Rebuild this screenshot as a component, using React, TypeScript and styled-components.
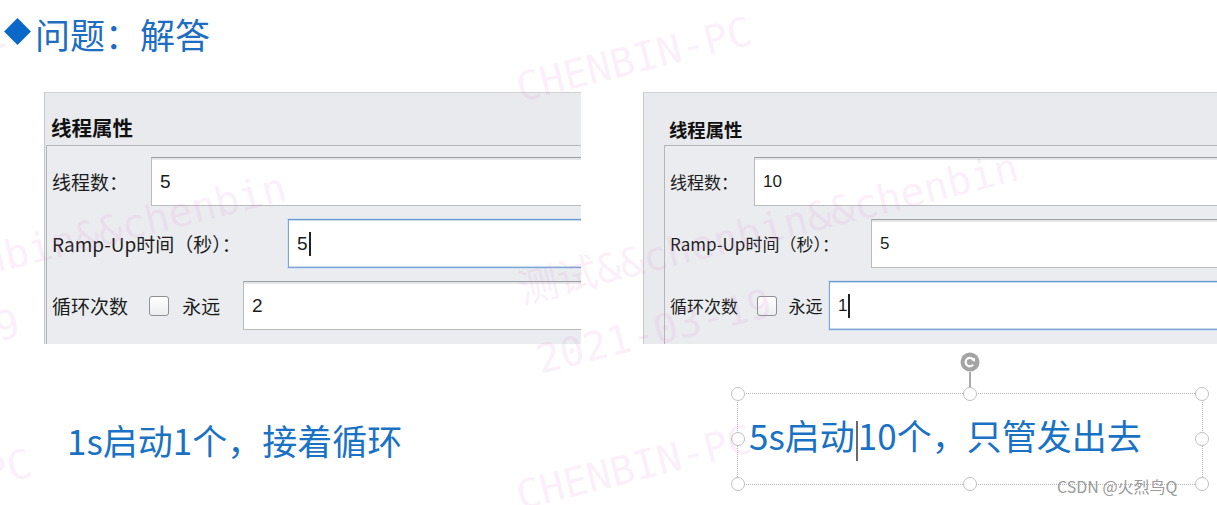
import React from "react";
import styled, { createGlobalStyle } from "styled-components";

const GlobalStyle = createGlobalStyle`
  html, body { margin: 0; padding: 0; background: #fff; }
  body { font-family: "Noto Sans CJK SC", "Noto Sans", sans-serif; }
`;

const Page = styled.div`
  position: relative;
  width: 1217px;
  height: 505px;
  overflow: hidden;
  background: #fff;
  display: flex;
  flex-direction: column;
`;

const Title = styled.h1`
  margin: 0;
  height: 66px;
  padding-left: 8px;
  display: flex;
  align-items: center;
  gap: 8px;
  font-size: 35px;
  font-weight: 400;
  line-height: 1;
  color: #1d6ec2;
`;

const Diamond = styled.span`
  width: 19px;
  height: 19px;
  margin-top: -3px;
  background: #0b67c8;
  transform: rotate(45deg);
`;

const Panels = styled.div`
  display: flex;
  gap: 62px;
  margin-top: 26px;
  padding-left: 44px;
  height: 252px;
`;

const Panel = styled.section<{ $w?: number; $inset: number; $fs: number }>`
  ${(p) => (p.$w ? `width: ${p.$w}px;` : `flex: 1;`)}
  box-sizing: border-box;
  display: flex;
  flex-direction: column;
  overflow: hidden;
  padding-left: ${(p) => p.$inset}px;
  background: #e8eaed;
  border-top: 1px solid #cfd1d4;
  border-left: 1px solid #c6c8cb;
  font-size: ${(p) => p.$fs}px;
  color: #1c1c1c;
`;

const Header = styled.div`
  height: 52px;
  box-sizing: border-box;
  display: flex;
  align-items: flex-end;
  padding: 0 0 5px 5px;
  font-size: 1.08em;
  font-weight: 700;
  line-height: 1.2;
  color: #111;
`;

const Inner = styled.div`
  flex: 1;
  display: flex;
  flex-direction: column;
  gap: 13px;
  padding-top: 11px;
  background: #eaecef;
  border-top: 1px solid #b4b6b9;
  border-left: 1px solid #b4b6b9;
`;

const Row = styled.div`
  display: flex;
  align-items: center;
  height: 49px;
`;

const Label = styled.div<{ $w: number }>`
  width: ${(p) => p.$w}px;
  flex: none;
  box-sizing: border-box;
  padding-left: 5px;
  display: flex;
  align-items: center;
  white-space: nowrap;
`;

const Check = styled.span`
  width: 20px;
  height: 20px;
  margin: 0 0.7em 0 1.1em;
  box-sizing: border-box;
  border: 1px solid #8e9094;
  border-radius: 3px;
  background: linear-gradient(#ffffff, #eceef0);
`;

const Field = styled.div<{ $focus?: boolean }>`
  flex: 1;
  height: 100%;
  box-sizing: border-box;
  display: flex;
  align-items: center;
  padding-left: 8px;
  background: #fff;
  font-family: "Liberation Sans", "Noto Sans", sans-serif;
  border: 1px solid ${(p) => (p.$focus ? "#7ea6d3" : "#b9bbbe")};
  border-top-color: ${(p) => (p.$focus ? "#6d99cc" : "#9c9ea1")};
  border-right: none;
  box-shadow: ${(p) =>
    p.$focus
      ? "inset 0 1px 0 #c9dbef, inset 0 -1px 0 #c9dbef, 0 0 0 1px #d3e2f3"
      : "inset 0 2px 0 #e4e6e9"};
`;

const Caret = styled.span<{ $h: number; $c: string }>`
  display: inline-block;
  width: 2px;
  height: ${(p) => p.$h}px;
  margin-left: 1px;
  background: ${(p) => p.$c};
  vertical-align: middle;
`;

const Bottom = styled.div`
  display: flex;
  align-items: center;
  justify-content: space-between;
  padding: 49px 14px 0 67px;
`;

const Caption = styled.div`
  font-size: 35px;
  line-height: 1;
  color: #1a72c5;
  white-space: nowrap;
`;

const Frame = styled.div`
  position: relative;
  width: 466px;
  height: 92px;
  box-sizing: border-box;
  border: 1.5px dotted #b7b7b7;
  padding-left: 11px;
  display: flex;
  align-items: center;
`;

const Handle = styled.span<{ $x: string; $y: string }>`
  position: absolute;
  left: ${(p) => p.$x};
  top: ${(p) => p.$y};
  width: 12px;
  height: 12px;
  margin: -7px 0 0 -7px;
  border: 1.5px solid #c0c0c0;
  border-radius: 50%;
  background: #fff;
`;

const Rotator = styled.div`
  position: absolute;
  left: 50%;
  top: -42px;
  width: 20px;
  margin-left: -10px;
  display: flex;
  flex-direction: column;
  align-items: center;
`;

const Stem = styled.span`
  width: 1.5px;
  height: 22px;
  background: #a9a9a9;
`;

const Credit = styled.div`
  position: absolute;
  left: 1057px;
  top: 474px;
  font-size: 16px;
  color: #9a9a9a;
  white-space: nowrap;
`;

const Mark = styled.div<{ $x: number; $y: number }>`
  position: absolute;
  left: ${(p) => p.$x}px;
  top: ${(p) => p.$y - 32}px;
  font-family: "DejaVu Sans Mono", "Noto Sans CJK SC", monospace;
  font-size: 40px;
  line-height: 40px;
  color: rgba(230, 130, 220, 0.14);
  white-space: nowrap;
  transform: rotate(-14deg);
  transform-origin: 0 80%;
  pointer-events: none;
`;

const marks = [
  { x: 520, y: 100, t: "CHENBIN-PC" },
  { x: 522, y: 302, t: "测试&&chenbin&&chenbin" },
  { x: 540, y: 372, t: "2021-03-19" },
  { x: 520, y: 508, t: "CHENBIN-PC" },
  { x: -225, y: 102, t: "CHENBIN-PC" },
  { x: -210, y: 322, t: "测试&&chenbin&&chenbin" },
  { x: -212, y: 392, t: "2021-03-19" },
  { x: -200, y: 532, t: "CHENBIN-PC" },
];

const handles: [string, string][] = [
  ["0%", "0%"],
  ["50%", "0%"],
  ["100%", "0%"],
  ["0%", "50%"],
  ["100%", "50%"],
  ["0%", "100%"],
  ["50%", "100%"],
  ["100%", "100%"],
];

const RotateIcon = () => (
  <svg width="20" height="20" viewBox="0 0 20 20">
    <circle cx="10" cy="10" r="9.5" fill="#a4a4a4" />
    <path d="M13.6 8.2 A4.2 4.2 0 1 0 13.2 12.6" fill="none" stroke="#fff" strokeWidth="2.2" />
    <path d="M11.2 7.6 L15 5.8 L14.8 9.9 Z" fill="#fff" />
  </svg>
);

type PanelProps = {
  w?: number;
  inset: number;
  fs: number;
  cols: [number, number, number];
  values: [string, string, string];
  focus: number;
};

const ThreadPanel = ({ w, inset, fs, cols, values, focus }: PanelProps) => (
  <Panel $w={w} $inset={inset} $fs={fs}>
    <Header>线程属性</Header>
    <Inner>
      <Row>
        <Label $w={cols[0]}>线程数：</Label>
        <Field $focus={focus === 0}>{values[0]}</Field>
      </Row>
      <Row>
        <Label $w={cols[1]}>Ramp-Up时间（秒）：</Label>
        <Field $focus={focus === 1}>
          {values[1]}
          {focus === 1 && <Caret $h={24} $c="#222" />}
        </Field>
      </Row>
      <Row>
        <Label $w={cols[2]}>
          循环次数
          <Check />
          永远
        </Label>
        <Field $focus={focus === 2}>
          {values[2]}
          {focus === 2 && <Caret $h={24} $c="#222" />}
        </Field>
      </Row>
    </Inner>
  </Panel>
);

const App = () => {
  return (
    <Page>
      <GlobalStyle />
      <Title>
        <Diamond />
        问题：解答
      </Title>
      <Panels>
        <ThreadPanel
          w={537}
          inset={1}
          fs={19}
          cols={[104, 241, 196]}
          values={["5", "5", "2"]}
          focus={1}
        />
        <ThreadPanel
          inset={20}
          fs={17}
          cols={[89, 206, 164]}
          values={["10", "5", "1"]}
          focus={2}
        />
      </Panels>
      <Bottom>
        <Caption>1s启动1个，接着循环</Caption>
        <Frame>
          <Rotator>
            <RotateIcon />
            <Stem />
          </Rotator>
          {handles.map(([x, y]) => (
            <Handle key={x + y} $x={x} $y={y} />
          ))}
          <Caption>
            5s启动
            <Caret $h={40} $c="#6a6a6a" />
            10个，只管发出去
          </Caption>
        </Frame>
      </Bottom>
      <Credit>CSDN @火烈鸟Q</Credit>
      {marks.map((m, i) => (
        <Mark key={i} $x={m.x} $y={m.y}>
          {m.t}
        </Mark>
      ))}
    </Page>
  );
};

export default App;
